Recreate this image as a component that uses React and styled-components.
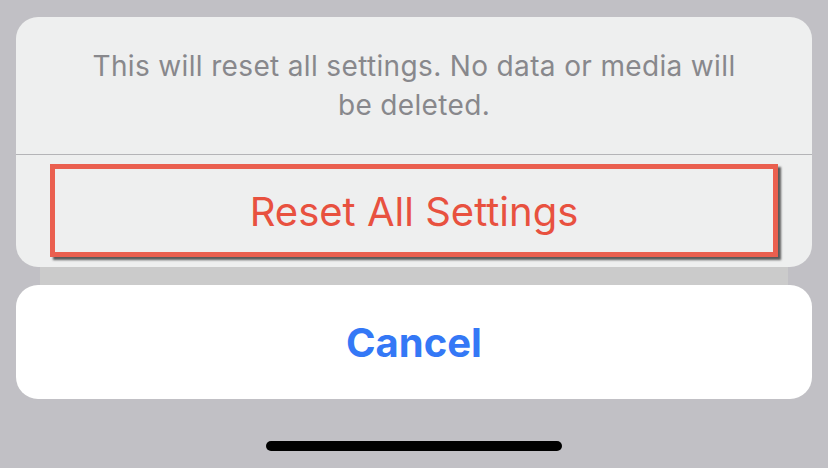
import React from "react";
import styled, { createGlobalStyle } from "styled-components";

const GlobalStyle = createGlobalStyle`
  html, body {
    margin: 0;
    padding: 0;
    background: #c1c0c5;
  }
  body {
    font-family: Inter, "Noto Sans", "Liberation Sans", sans-serif;
    -webkit-font-smoothing: antialiased;
  }
`;

const App = () => {
  return (
    <Screen>
      <GlobalStyle />
      <Sheet>
        <Message>
          This will reset all settings. No data or media will
          <br />
          be deleted.
        </Message>
        <ActionButton>
          Reset All Settings
          <Highlight />
        </ActionButton>
      </Sheet>
      <StackEdge />
      <CancelCard>Cancel</CancelCard>
      <HomeBar />
    </Screen>
  );
};

export default App;

const Screen = styled.div`
  width: 828px;
  height: 468px;
  box-sizing: border-box;
  padding: 17px 16px 0;
  display: flex;
  flex-direction: column;
  align-items: center;
  background: #c1c0c5;
  overflow: hidden;
`;

const Sheet = styled.div`
  width: 100%;
  background: #eeefef;
  border-radius: 22px;
  display: flex;
  flex-direction: column;
  overflow: hidden;
`;

const Message = styled.div`
  height: 138px;
  box-sizing: border-box;
  padding: 30px 10px;
  border-bottom: 1px solid #b4b4b7;
  text-align: center;
  font-size: 28px;
  line-height: 39px;
  color: #88888c;
  letter-spacing: 0.35px;
  white-space: nowrap;
`;

const ActionButton = styled.div`
  position: relative;
  height: 112px;
  display: flex;
  align-items: center;
  justify-content: center;
  font-size: 40px;
  color: #e8513f;
  box-sizing: border-box;
`;

const Highlight = styled.div`
  position: absolute;
  left: 34px;
  right: 34px;
  top: 9px;
  bottom: 10px;
  border: 5px solid #ea5f4f;
  box-shadow: 3px 3px 2px rgba(40, 40, 40, 0.75);
`;

const StackEdge = styled.div`
  width: calc(100% - 48px);
  height: 18px;
  background: #cbcbcb;
`;

const CancelCard = styled.div`
  width: 100%;
  height: 114px;
  background: #ffffff;
  border-radius: 22px;
  display: flex;
  align-items: center;
  justify-content: center;
  font-size: 40px;
  font-weight: 700;
  color: #3478f6;
`;

const HomeBar = styled.div`
  margin-top: 42px;
  width: 296px;
  height: 10px;
  border-radius: 5px;
  background: #000000;
`;
